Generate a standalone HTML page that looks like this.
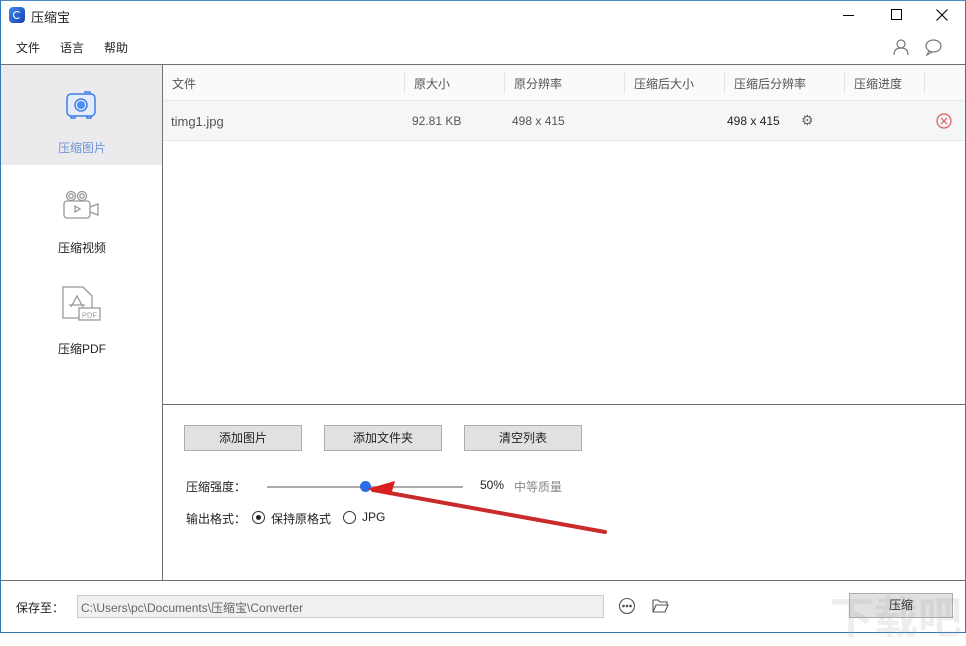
<!DOCTYPE html>
<html><head><meta charset="utf-8"><style>
*{margin:0;padding:0;box-sizing:border-box}
body{width:966px;height:633px;overflow:hidden;background:#fff;font-family:"Liberation Sans","Noto Sans CJK SC",sans-serif;font-size:12px;color:#222;position:relative}
.a{position:absolute}
.frame{left:0;top:0;width:966px;height:633px;border:1px solid #2f79b5;border-top:1px solid #4a8cc2}
.hdr{color:#555;font-size:12px;top:75px}
.btn{top:425px;height:26px;background:#e1e1e1;border:1px solid #adadad;text-align:center;line-height:24px;font-size:12px}
</style></head><body>
<div class="a frame"></div>
<div class="a" style="left:9px;top:7px;width:16px;height:16px;border-radius:4px;background:linear-gradient(135deg,#3b8bf0,#1b3fb0)"><div class="a" style="left:4px;top:4px;width:8px;height:8px;border:1.5px solid #fff;border-radius:50%;border-right-color:transparent"></div></div>
<div class="a" style="left:31px;top:7px;font-size:13px">压缩宝</div>
<div class="a" style="left:843px;top:15px;width:11px;height:1px;background:#000"></div>
<div class="a" style="left:891px;top:9px;width:11px;height:11px;border:1px solid #000"></div>
<svg class="a" style="left:936px;top:9px" width="12" height="12" stroke="#000" stroke-width="1.1"><path d="M0.5 0.5l11 11M11.5 0.5l-11 11"/></svg>
<div class="a" style="left:16px;top:39px;font-size:12px">文件</div>
<div class="a" style="left:60px;top:39px;font-size:12px">语言</div>
<div class="a" style="left:104px;top:39px;font-size:12px">帮助</div>
<svg class="a" style="left:892px;top:38px" width="18" height="18" fill="none" stroke="#777" stroke-width="1.2"><circle cx="9" cy="6" r="4"/><path d="M2 17c0-5 3-7 7-7s7 2 7 7"/></svg>
<svg class="a" style="left:924px;top:38px" width="18" height="18" fill="none" stroke="#777" stroke-width="1.2"><ellipse cx="9.5" cy="8" rx="7.5" ry="6"/><path d="M5 13l-2 4 5-3"/></svg>
<div class="a" style="left:1px;top:64px;width:964px;height:1px;background:#707070"></div>
<div class="a" style="left:1px;top:65px;width:161px;height:100px;background:#ebebee"></div>
<div class="a" style="left:162px;top:65px;width:1px;height:515px;background:#707070"></div>
<div class="a" style="left:163px;top:404px;width:802px;height:1px;background:#707070"></div>
<div class="a" style="left:1px;top:580px;width:964px;height:1px;background:#707070"></div>
<svg class="a" style="left:65px;top:90px" width="32" height="30" fill="none" stroke="#3f7ee8" stroke-width="1.5"><rect x="2" y="4" width="28" height="22" rx="4" fill="#e4ebfa"/><circle cx="16" cy="15" r="6"/><circle cx="16" cy="15" r="4" fill="#4d8ef0" stroke="none"/><path d="M20 4v-2h5v2M6 26v2h4v-2M22 26v2h4v-2"/></svg>
<div class="a" style="left:58px;top:139px;color:#6d95d6">压缩图片</div>
<svg class="a" style="left:63px;top:190px" width="38" height="30" fill="none" stroke="#999" stroke-width="1.3"><circle cx="8" cy="6" r="4.5"/><circle cx="8" cy="6" r="2.2"/><circle cx="19" cy="6" r="4.5"/><circle cx="19" cy="6" r="2.2"/><rect x="1" y="11" width="26" height="17" rx="3"/><path d="M27 17l8-3v11l-8-3"/><path d="M12 16v6l5-3z"/></svg>
<div class="a" style="left:58px;top:239px">压缩视频</div>
<svg class="a" style="left:62px;top:286px" width="40" height="36" fill="none" stroke="#999" stroke-width="1.3"><path d="M1 1h20l9 9v22H1z"/><rect x="17" y="22" width="21" height="12" fill="#fff"/><path d="M9 21l6-11 6 11M7 19h16"/><text x="20" y="31.5" font-size="7.5" fill="#999" stroke="none" font-family="Liberation Sans">PDF</text></svg>
<div class="a" style="left:58px;top:340px">压缩PDF</div>
<div class="a" style="left:163px;top:65px;width:802px;height:36px;background:#fafafb;border-bottom:1px solid #e8e8e8"></div>
<div class="a hdr" style="left:172px">文件</div>
<div class="a hdr" style="left:414px">原大小</div>
<div class="a hdr" style="left:514px">原分辨率</div>
<div class="a hdr" style="left:634px">压缩后大小</div>
<div class="a hdr" style="left:734px">压缩后分辨率</div>
<div class="a hdr" style="left:854px">压缩进度</div>
<div class="a" style="left:404px;top:72px;width:1px;height:22px;background:#e6e6e6"></div>
<div class="a" style="left:504px;top:72px;width:1px;height:22px;background:#e6e6e6"></div>
<div class="a" style="left:624px;top:72px;width:1px;height:22px;background:#e6e6e6"></div>
<div class="a" style="left:724px;top:72px;width:1px;height:22px;background:#e6e6e6"></div>
<div class="a" style="left:844px;top:72px;width:1px;height:22px;background:#e6e6e6"></div>
<div class="a" style="left:924px;top:72px;width:1px;height:22px;background:#e6e6e6"></div>
<div class="a" style="left:163px;top:101px;width:802px;height:40px;background:#f5f6f8;border-bottom:1px solid #e6e6e6"></div>
<div class="a" style="left:171px;top:114px;font-size:13px;color:#555">timg1.jpg</div>
<div class="a" style="left:412px;top:114px;font-size:12px;color:#555">92.81 KB</div>
<div class="a" style="left:512px;top:114px;font-size:12px;color:#555">498 x 415</div>
<div class="a" style="left:727px;top:114px;font-size:12px;color:#222">498 x 415</div>
<div class="a" style="left:801px;top:112px;font-size:14px;color:#666">⚙</div>
<svg class="a" style="left:936px;top:113px" width="16" height="16" fill="none" stroke="#e05a5a" stroke-width="1.2"><circle cx="8" cy="8" r="7"/><path d="M5 5l6 6M11 5l-6 6"/></svg>
<div class="a btn" style="left:184px;width:118px">添加图片</div>
<div class="a btn" style="left:324px;width:118px">添加文件夹</div>
<div class="a btn" style="left:464px;width:118px">清空列表</div>
<div class="a" style="left:186px;top:478px">压缩强度：</div>
<div class="a" style="left:267px;top:486px;width:196px;height:2px;background:#aaa"></div>
<div class="a" style="left:360px;top:481px;width:11px;height:11px;border-radius:50%;background:#2c6ee8"></div>
<div class="a" style="left:480px;top:478px">50%</div>
<div class="a" style="left:514px;top:478px;color:#888">中等质量</div>
<div class="a" style="left:186px;top:510px">输出格式：</div>
<div class="a" style="left:252px;top:511px;width:13px;height:13px;border:1px solid #333;border-radius:50%"><div class="a" style="left:3px;top:3px;width:5px;height:5px;border-radius:50%;background:#222"></div></div>
<div class="a" style="left:271px;top:510px">保持原格式</div>
<div class="a" style="left:343px;top:511px;width:13px;height:13px;border:1px solid #333;border-radius:50%"></div>
<div class="a" style="left:362px;top:510px">JPG</div>
<svg class="a" style="left:365px;top:480px" width="250" height="60"><path d="M8 10L240 52" stroke="#c92a2a" stroke-width="4" stroke-linecap="round"/><path d="M2 9l28-8-4 14z" fill="#d92020"/></svg>
<div class="a" style="left:16px;top:599px">保存至：</div>
<div class="a" style="left:77px;top:595px;width:527px;height:23px;background:#f0f0f0;border:1px solid #ccc;color:#666;padding:3px 0 0 3px;font-size:12px">C:\Users\pc\Documents\压缩宝\Converter</div>
<svg class="a" style="left:618px;top:597px" width="18" height="18" fill="none" stroke="#555" stroke-width="1.1"><circle cx="9" cy="9" r="7.5"/><circle cx="5.5" cy="9" r=".8" fill="#555"/><circle cx="9" cy="9" r=".8" fill="#555"/><circle cx="12.5" cy="9" r=".8" fill="#555"/></svg>
<svg class="a" style="left:652px;top:598px" width="18" height="16" fill="none" stroke="#555" stroke-width="1.1"><path d="M1 2h5l2 2h7v3M1 2v12h12l3-7H4L1 14"/></svg>
<div class="a" style="left:849px;top:593px;width:104px;height:25px;background:#e1e1e1;border:1px solid #adadad;text-align:center;line-height:23px">压缩</div>
<div class="a" style="left:830px;top:582px;font-size:44px;color:rgba(160,160,160,.18);font-weight:bold">下载吧</div>
</body></html>
